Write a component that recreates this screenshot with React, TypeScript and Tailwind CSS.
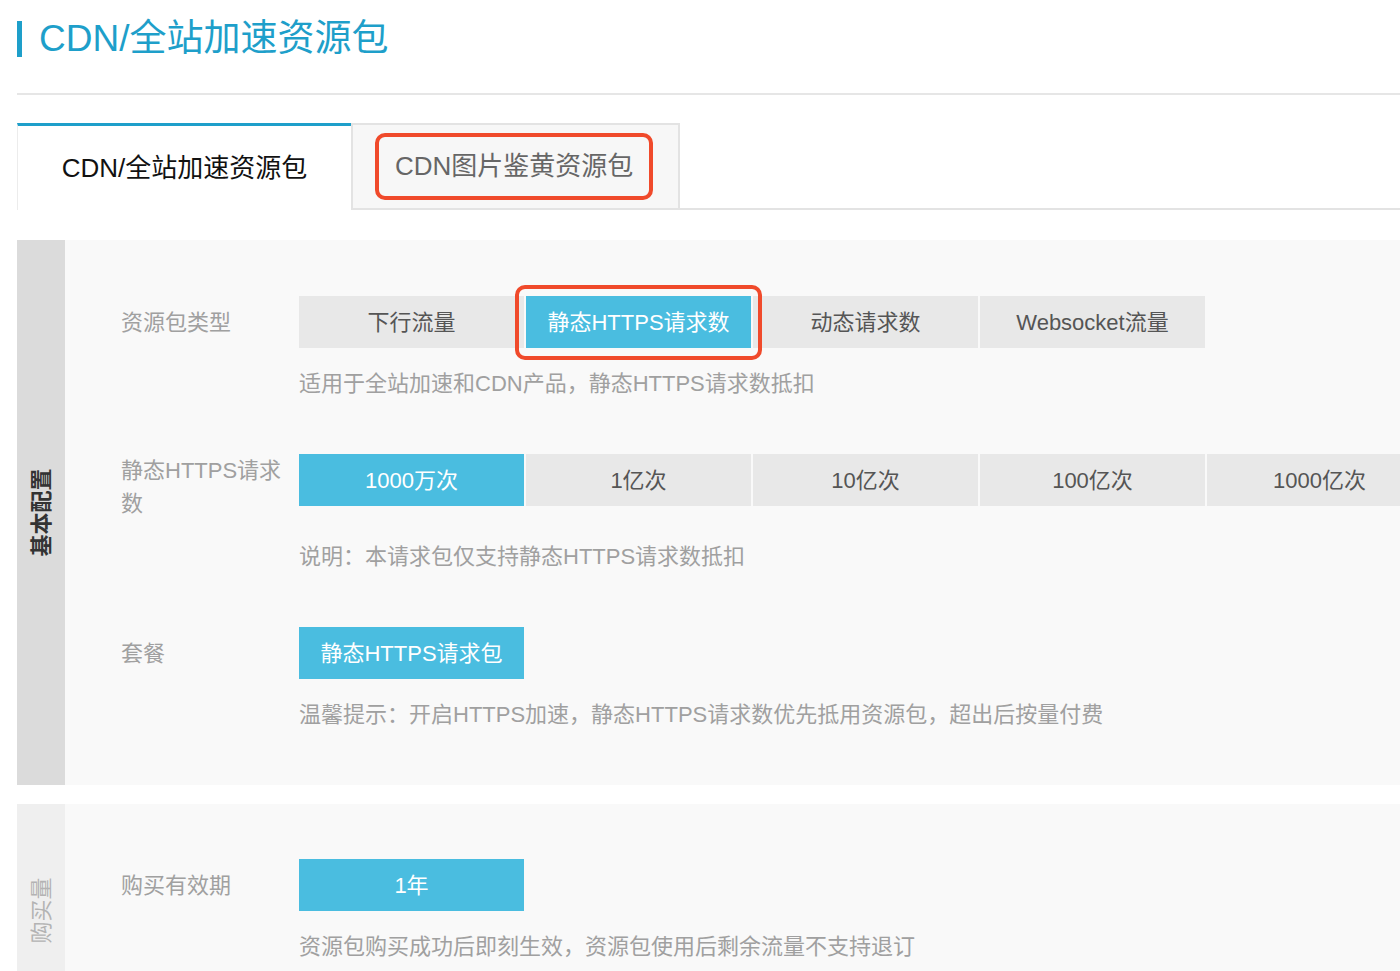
import React from "react";

const font = { fontFamily: '"Liberation Sans", "Noto Sans CJK SC", sans-serif' };

function Btn({ label, active, annotate }: { label: string; active?: boolean; annotate?: boolean }) {
  return (
    <div className={"relative shrink-0 " + (annotate ? "z-10" : "")}>
      <div
        className={
          "w-[225px] h-[52px] flex items-center justify-center text-[22px] " +
          (active ? "bg-[#4abde0] text-white" : "bg-[#e8e8e8] text-[#555555]")
        }
      >
        {label}
      </div>
      {annotate && (
        <div className="absolute -top-[11px] -bottom-[12px] -left-[11px] -right-[11px] border-4 border-[#f04a2b] rounded-[10px] pointer-events-none" />
      )}
    </div>
  );
}

export default function App() {
  return (
    <div className="w-full min-h-[971px] bg-white overflow-hidden pl-[17px]" style={font}>
      {/* Title */}
      <div className="pt-[21px] flex items-center">
        <div className="w-[5px] h-[36px] bg-[#1e9fca]" />
        <div className="ml-[17px] text-[37px] leading-[36px] text-[#1e9fca] whitespace-nowrap">CDN/全站加速资源包</div>
      </div>
      <div className="mt-[36px] h-[2px] bg-[#e6e6e6]" />

      {/* Tabs */}
      <div className="mt-[28px] flex border-b-2 border-[#e3e3e3]">
        <div className="w-[334px] h-[87px] -mb-[2px] bg-white border-t-[3px] border-[#1e9fca] border-l border-l-[#ececec] flex items-center justify-center text-[26px] text-[#111111] whitespace-nowrap">
          CDN/全站加速资源包
        </div>
        <div className="h-[85px] bg-[#f7f7f7] border-2 border-b-0 border-[#e3e3e3] flex items-center pl-[22px] pr-[25px]">
          <div className="h-[67px] px-[16px] border-4 border-[#f04a2b] rounded-[10px] flex items-center text-[26px] text-[#666666] whitespace-nowrap">
            CDN图片鉴黄资源包
          </div>
        </div>
      </div>

      {/* Panel 1 */}
      <div className="mt-[30px] flex bg-[#f9f9f9]">
        <div className="w-[48px] shrink-0 bg-[#dbdbdb] flex items-center justify-center">
          <span className="-rotate-90 whitespace-nowrap text-[22px] font-bold text-[#333333]">基本配置</span>
        </div>
        <div className="pl-[56px] pt-[56px] pb-[55px] flex flex-col">
          {/* row 1 */}
          <div className="flex items-start">
            <div className="w-[178px] shrink-0 pr-[12px] pt-[10px] leading-[33px] text-[22px] text-[#a0a0a0]">资源包类型</div>
            <div className="flex flex-col">
              <div className="flex gap-[2px]">
                <Btn label="下行流量" />
                <Btn label="静态HTTPS请求数" active annotate />
                <Btn label="动态请求数" />
                <Btn label="Websocket流量" />
              </div>
              <div className="mt-[21px] leading-[30px] text-[22px] text-[#a0a0a0] whitespace-nowrap">
                适用于全站加速和CDN产品，静态HTTPS请求数抵扣
              </div>
            </div>
          </div>

          {/* row 2 */}
          <div className="mt-[55px] flex items-start">
            <div className="w-[178px] shrink-0 pr-[12px] leading-[33px] text-[22px] text-[#a0a0a0]">静态HTTPS请求数</div>
            <div className="flex flex-col">
              <div className="flex gap-[2px]">
                <Btn label="1000万次" active />
                <Btn label="1亿次" />
                <Btn label="10亿次" />
                <Btn label="100亿次" />
                <Btn label="1000亿次" />
              </div>
              <div className="mt-[36px] leading-[30px] text-[22px] text-[#a0a0a0] whitespace-nowrap">
                说明：本请求包仅支持静态HTTPS请求数抵扣
              </div>
            </div>
          </div>

          {/* row 3 */}
          <div className="mt-[55px] flex items-start">
            <div className="w-[178px] shrink-0 pr-[12px] pt-[10px] leading-[33px] text-[22px] text-[#a0a0a0]">套餐</div>
            <div className="flex flex-col">
              <div className="flex gap-[2px]">
                <Btn label="静态HTTPS请求包" active />
              </div>
              <div className="mt-[21px] leading-[30px] text-[22px] text-[#a0a0a0] whitespace-nowrap">
                温馨提示：开启HTTPS加速，静态HTTPS请求数优先抵用资源包，超出后按量付费
              </div>
            </div>
          </div>
        </div>
      </div>

      {/* Panel 2 */}
      <div className="mt-[19px] flex bg-[#f9f9f9]">
        <div className="w-[48px] shrink-0 bg-[#efefef] flex items-center justify-center">
          <span className="-rotate-90 whitespace-nowrap text-[22px] text-[#b3b3b3]">购买量</span>
        </div>
        <div className="pl-[56px] pt-[55px] pb-[55px] flex flex-col">
          <div className="flex items-start">
            <div className="w-[178px] shrink-0 pr-[12px] pt-[10px] leading-[33px] text-[22px] text-[#a0a0a0]">购买有效期</div>
            <div className="flex flex-col">
              <div className="flex gap-[2px]">
                <Btn label="1年" active />
              </div>
              <div className="mt-[21px] leading-[30px] text-[22px] text-[#a0a0a0] whitespace-nowrap">
                资源包购买成功后即刻生效，资源包使用后剩余流量不支持退订
              </div>
            </div>
          </div>
        </div>
      </div>
    </div>
  );
}
